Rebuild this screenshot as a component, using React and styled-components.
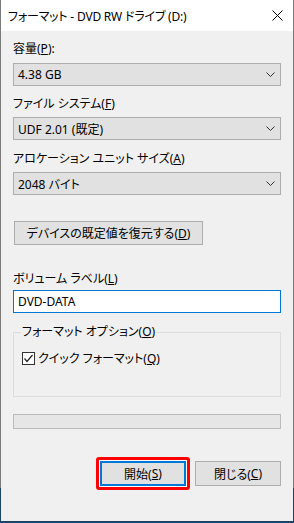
import styled, { createGlobalStyle } from "styled-components";

const GlobalStyle = createGlobalStyle`
  html, body {
    margin: 0;
    padding: 0;
    background: #1d4466;
  }
  body {
    font-family: "Noto Sans", "Noto Sans CJK JP", sans-serif;
    font-size: 12px;
    color: #000;
  }
`;

const Frame = styled.div`
  width: 294px;
  height: 523px;
  box-sizing: border-box;
  padding: 0 1px 2px 1px;
  background: linear-gradient(to bottom, #7a7a7a 0, #7a7a7a 488px, #1d4466 488px);
  display: flex;
`;

const Window = styled.div`
  flex: 1;
  display: flex;
  flex-direction: column;
  background: #f0f0f0;
  font-feature-settings: "palt";
`;

const TitleBar = styled.div`
  height: 31px;
  background: #fff;
  display: flex;
  align-items: center;
  justify-content: space-between;
  padding: 0 10px 0 7px;
`;

const TitleText = styled.span`
  font-size: 12px;
  letter-spacing: -0.2px;
`;

const Body = styled.div`
  flex: 1;
  display: flex;
  flex-direction: column;
  padding: 10px 12px 0 12px;
`;

const Label = styled.div`
  height: 16px;
  line-height: 16px;
  margin-top: ${(p) => p.$top || 0}px;
  margin-bottom: ${(p) => p.$gap || 6}px;
  white-space: nowrap;
`;

const Select = styled.div`
  height: 23px;
  box-sizing: border-box;
  border: 1px solid #adadad;
  background: #e1e1e1;
  display: flex;
  align-items: center;
  justify-content: space-between;
  padding: 0 5px 0 4px;
`;

const Chevron = () => (
  <svg width="9" height="5" viewBox="0 0 9 5">
    <path d="M0.5 0.5 L4.5 4.5 L8.5 0.5" fill="none" stroke="#333" strokeWidth="1" />
  </svg>
);

const Button = styled.div`
  width: ${(p) => p.$w || 86}px;
  height: ${(p) => p.$h || 25}px;
  box-sizing: border-box;
  border: ${(p) => (p.$default ? "2px solid #0078d7" : "1px solid #adadad")};
  background: #e1e1e1;
  display: flex;
  align-items: center;
  justify-content: center;
  margin-top: ${(p) => p.$top || 0}px;
  margin-left: ${(p) => p.$left || 0}px;
  white-space: nowrap;
`;

const Input = styled.div`
  height: 23px;
  box-sizing: border-box;
  border: 1px solid #0078d7;
  background: #fff;
  display: flex;
  align-items: center;
  padding: 0 4px;
`;

const Group = styled.fieldset`
  margin: 11px 0 0 0;
  padding: 10px 8px 30px 8px;
  border: 1px solid #dcdcdc;
  min-width: 0;
`;

const Legend = styled.legend`
  padding: 0 1px;
  margin-left: -1px;
  line-height: 16px;
`;

const CheckRow = styled.label`
  display: flex;
  align-items: center;
  gap: 3px;
  height: 16px;
`;

const CheckBox = styled.span`
  width: 13px;
  height: 13px;
  box-sizing: border-box;
  border: 1px solid #333;
  background: #fff;
  display: flex;
  align-items: center;
  justify-content: center;
`;

const Progress = styled.div`
  height: 15px;
  box-sizing: border-box;
  margin-top: 17px;
  border: 1px solid #bcbcbc;
  background: #e6e6e6;
`;

const Actions = styled.div`
  display: flex;
  justify-content: flex-end;
  gap: 9px;
  margin-top: 32px;
`;

const Highlight = styled.div`
  margin: -4px;
  padding: 1px;
  border: 3px solid #ff0000;
  border-radius: 3px;
  background: #fff;
  display: flex;
`;

export default function App() {
  return (
    <>
      <GlobalStyle />
      <Frame>
        <Window>
          <TitleBar>
            <TitleText>フォーマット - DVD RW ドライブ (D:)</TitleText>
            <svg width="11" height="11" viewBox="0 0 11 11">
              <path d="M0.5 0.5 L10.5 10.5 M10.5 0.5 L0.5 10.5" stroke="#000" strokeWidth="1" />
            </svg>
          </TitleBar>
          <Body>
            <Label $gap={6}>
              容量(<u>P</u>):
            </Label>
            <Select>
              <span>4.38 GB</span>
              <Chevron />
            </Select>
            <Label $top={10} $gap={5}>
              ファイル システム(<u>F</u>)
            </Label>
            <Select>
              <span>UDF 2.01 (既定)</span>
              <Chevron />
            </Select>
            <Label $top={11} $gap={5}>
              アロケーション ユニット サイズ(<u>A</u>)
            </Label>
            <Select>
              <span>2048 バイト</span>
              <Chevron />
            </Select>
            <Button $w={189} $h={24} $top={26} $left={1}>
              デバイスの既定値を復元する(<u>D</u>)
            </Button>
            <Label $top={26} $gap={3}>
              ボリューム ラベル(<u>L</u>)
            </Label>
            <Input>DVD-DATA</Input>
            <Group>
              <Legend>
                フォーマット オプション(<u>O</u>)
              </Legend>
              <CheckRow>
                <CheckBox>
                  <svg width="11" height="11" viewBox="0 0 11 11">
                    <path d="M1.5 5.5 L4 8.5 L9.5 2" fill="none" stroke="#222" strokeWidth="1.2" />
                  </svg>
                </CheckBox>
                <span>
                  クイック フォーマット(<u>Q</u>)
                </span>
              </CheckRow>
            </Group>
            <Progress />
            <Actions>
              <Highlight>
                <Button $default>
                  開始(<u>S</u>)
                </Button>
              </Highlight>
              <Button>
                閉じる(<u>C</u>)
              </Button>
            </Actions>
          </Body>
        </Window>
      </Frame>
    </>
  );
}
